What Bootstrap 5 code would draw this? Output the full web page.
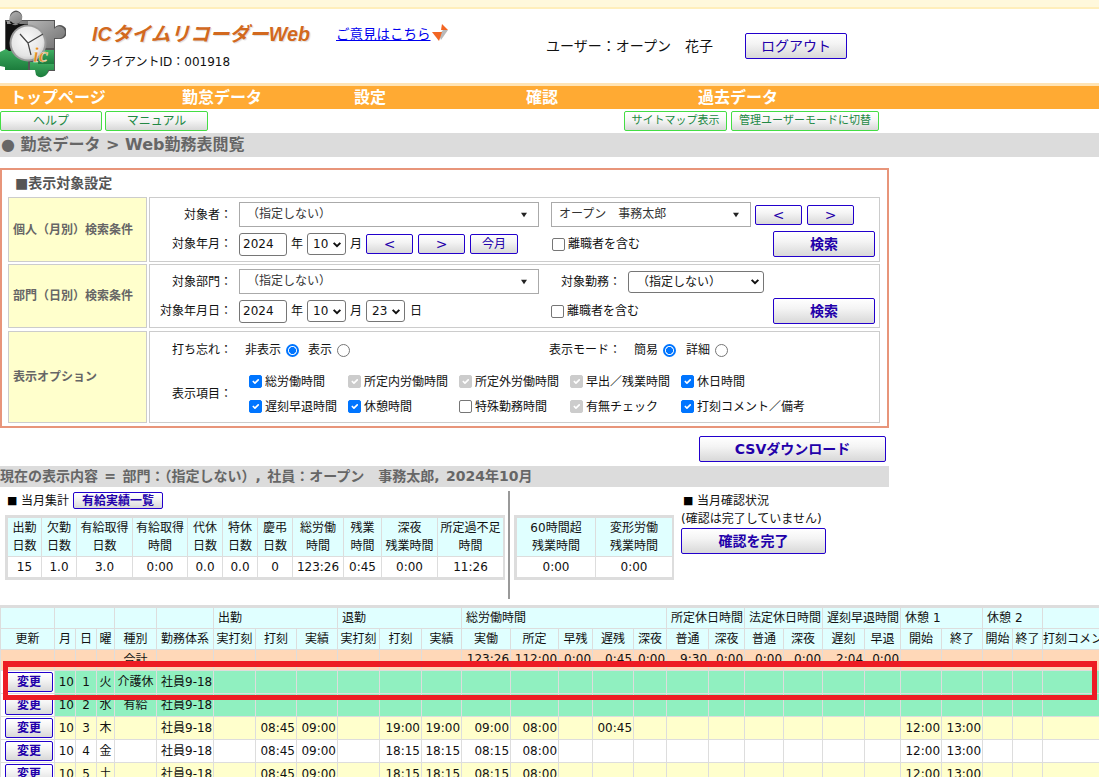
<!DOCTYPE html>
<html lang="ja">
<head>
<meta charset="utf-8">
<title>Web勤務表閲覧</title>
<link href="https://cdn.jsdelivr.net/npm/bootstrap@5.3.0/dist/css/bootstrap.min.css" rel="stylesheet">
<style>
html,body{height:777px;overflow:hidden}
body{font-family:"DejaVu Sans","Noto Sans CJK JP",sans-serif;font-size:12px;line-height:18px;color:#111;background:#fff}
.topstrip{height:9px;background:#fff8dc;border-bottom:2px solid #ffeebb}
.hdr{height:74px}
.logo-box{width:88px;padding-top:1px}
.hdr-a{width:458px;padding-top:12px}
.app-title{width:248px;padding-left:4px;font:italic bold 19.7px/26px "Liberation Sans","Noto Sans CJK JP",sans-serif;color:#d2691e;text-shadow:1px 1px 1px #ddd;white-space:nowrap}
.opinion{font-size:13.5px;line-height:26px;color:#0000ee;white-space:nowrap}
.opinion-ic{margin-top:3px;margin-left:1px}
.client{margin-top:6px}
.username{font-size:14px;width:168px;white-space:nowrap}
.hdrline{height:3px;background:#ffe4b5}
.mainnav{height:23px;background:#ffaa33;padding-left:10px}
.mainnav a{width:172px;font-size:16px;font-weight:700;line-height:23px;color:#fff;text-decoration:none;white-space:nowrap}
.subnav{height:24px;padding-top:2px}
.btn.gbtn{padding:0;height:20px;font-size:12px;line-height:18px;color:#228844;font-weight:400;border:1px solid #44dd44;border-radius:2px;background:linear-gradient(#fff,#f6f6f6 45%,#d8d8d8);white-space:nowrap}
.gb1{width:102px}.gb2{width:103px;margin-left:3px}
.gb3{width:103px;margin-left:416px;font-size:11px!important}
.gb4{width:148px;margin-left:4px;font-size:11px!important}
.crumb{height:24px;background:#dcdcdc;color:#666;font-size:16px;font-weight:700;line-height:23px;padding-left:1px;white-space:nowrap}
.panel{width:889px;height:260px;margin-top:11px;border:2px solid #e8957a;padding:0 7px 3px 6px}
.panel-title{height:27px;padding-left:7px;line-height:27px;font-size:14px;font-weight:700;color:#555}
.prow{gap:2px;margin-bottom:2px}
.h65{height:65px}.h64{height:64px;margin-bottom:3px}.h92{height:92px;margin-bottom:0}
.lc{width:139px;border:1px solid #ccc;background:#ffffcc;color:#666;font-weight:700;padding-left:4px;white-space:nowrap}
.rc{width:731px;border:1px solid #ccc;padding:4px 4px 0 0;white-space:nowrap}
.line1{height:25px}.line2{height:26px;margin-top:4px}
.lb{width:82px;margin-right:7px;text-align:right;flex:none}
.form-select.bigsel{height:25px;padding:0 20px 0 7px;font-size:12px;line-height:23px;color:#333;border:1px solid #aaa;border-radius:0;background-image:url("data:image/svg+xml,%3Csvg xmlns='http://www.w3.org/2000/svg' viewBox='0 0 10 8'%3E%3Cpath d='M1 1h8L5 7z' fill='%23222'/%3E%3C/svg%3E");background-size:8px 6px;background-position:right 10px center}
.w300{width:300px}.w200{width:200px;margin-left:12px}
.form-control.yearin{width:48px;height:23px;padding:0 3px;font-size:12px;border:1px solid #767676;border-radius:3px;color:#111}
.form-select.smsel{width:39px;height:22px;padding:0 0 0 5px;font-size:12px;color:#111;border:1px solid #767676;border-radius:3px;background-image:url("data:image/svg+xml,%3Csvg xmlns='http://www.w3.org/2000/svg' viewBox='0 0 12 8'%3E%3Cpath d='M2 2l4 4 4-4' fill='none' stroke='%23111' stroke-width='2.4'/%3E%3C/svg%3E");background-size:10px 7px;background-position:right 3px center}
.ml4{margin-left:4px}.ml5{margin-left:5px}
.btn.bbtn{padding:0;font-size:12px;line-height:16px;color:#2200aa;border:1px solid #2200cc;border-radius:2px;background:linear-gradient(#fff,#f4f4f4 40%,#d8d8d8);white-space:nowrap}
.btn.bbold{font-weight:700}
.btn.bbtn.logout{width:102px;height:26px;margin-left:31px;font-size:14px}
.navb{width:47px;height:20px;font-size:14px!important}
.today{width:48px;height:20px;margin-left:5px}
.searchb{width:102px;height:26px;font-size:14px!important}
.ms-sr{margin-left:auto}
.form-check-input.ck{width:13px;height:13px;margin:0 3px 0 0;border:1px solid #767676;border-radius:2px;flex:none}
.form-check-input.ck:checked{background-color:#0075ff;border-color:#0075ff}
.form-check-input.ck.grey:checked,.form-check-input.ck.grey:disabled{background-color:#ccc;border-color:#ccc;opacity:1}
.form-check-input.rd{width:13px;height:13px;margin:0 0 0 5px;border:1px solid #767676;flex:none}
.form-check-input.rd:checked{background:radial-gradient(circle,#0075ff 0 3.2px,#fff 3.8px);border:2px solid #0075ff}
.chk-a{margin-left:34px}.chk-b{margin-left:129px}
.ml22{margin-left:22px}
.form-select.kinmu{width:136px;margin-left:7px;padding-left:8px}
.opt-line{height:24px;margin-top:5px}
.r-a{margin-left:-2px}.r-b{margin-left:9px}.mode{margin-left:199px}.r-c{margin-left:13px}.r-d{margin-left:10px}
.opt-items{margin-top:7px}
.itemgrid{display:grid;grid-template-columns:99px 111px 111px 111px auto;grid-auto-rows:25px;margin-left:10px}
.itemgrid label{display:flex;align-items:center;white-space:nowrap}
.h92 .rc{padding-top:1px}
.csvrow{margin-top:8px;width:886px}
.csvb{width:187px;height:26px;font-size:14px!important}
.band{width:889px;height:21px;margin-top:4px;background:#dcdcdc;color:#666;font-size:14px;font-weight:700;line-height:20px;white-space:nowrap;word-spacing:1.5px}
.sumarea{height:118px}
.sum-left{width:500px;margin-left:5px;flex:none}
.sumhead{height:17px;margin-top:5px;margin-left:2px}
.sq{width:14px;font-size:11px;line-height:17px;color:#000}
.yuukyu{width:90px;height:17px;margin-left:4px;line-height:14px!important}
.stwrap{margin-top:6px;border:2px solid #ddd}
.stwrap2{width:160px;margin-left:4px;margin-top:28px;flex:none;align-self:flex-start}
.divider{width:2px;height:108px;margin-left:3px;margin-top:4px;background:#999;flex:none}
.sum-right{margin-left:7px;margin-top:4px;white-space:nowrap}
.kakunin-h{height:19px;padding-left:2px}
.kakuninb{width:145px;height:26px;font-size:14px!important;display:block}
.table.st{width:100%;margin:0;table-layout:fixed;--bs-table-bg:#fff;border-color:#ddd;--bs-border-color:#ddd}
.table.st>:not(caption)>*>*{padding:0;border:1px solid #ddd;text-align:center;vertical-align:middle;line-height:18px;font-size:12px;white-space:nowrap;overflow:hidden;color:#111}
.table.st th{font-weight:400;height:39px;--bs-table-bg:#e0ffff}
.table.st td{height:21px}
.s1{width:34px}.s2{width:35px}.s3{width:56px}.s4{width:55px}.s8{width:51px}.s9{width:38px}.s11{width:66px}.s12{width:79px}.s13{width:77px}
.wtwrap{border-top:2px solid #ddd;height:172px;overflow:hidden;position:relative;width:1099px}
.table.wt{width:1140px;margin:0;table-layout:fixed;--bs-table-bg:#fff}
.table.wt>:not(caption)>*>*{padding:0 1px 0 0;border:1px solid #ddd;vertical-align:middle;line-height:16px;font-size:12px;font-weight:400;white-space:nowrap;overflow:hidden;text-align:right;color:#111}
.table.wt tr.hd1>*,.table.wt tr.hd2>*{--bs-table-bg:#e0ffff;height:21px}
.table.wt tr.hd2>*{text-align:center;padding:0}
.table.wt tr.hd1>*{text-align:left;padding-left:4px}
.table.wt tr.sm>*{--bs-table-bg:#ffd8b8;height:21px;line-height:12px;vertical-align:top;padding-top:3px}
.table.wt tr.gr>*{--bs-table-bg:#90f0c0;height:23px}
.table.wt tr.yl>*{--bs-table-bg:#ffffcc;height:23px}
.table.wt tr.wh>*{--bs-table-bg:#fff;height:23px}
.table.wt tr>.upd{--bs-table-bg:#fff;padding:0 0 0 4px;text-align:left}
.table.wt tr>.ctr{text-align:center;padding:0}
.table.wt tr.sm>.ctr{padding-top:4px}
.table.wt tr>.lft{text-align:left;padding:0 0 0 4px}
.henko{width:48px;height:20px;display:block}
.c54{width:54px}.c21{width:21px}.c18{width:18px}.c42{width:42px}.c57{width:57px}.c41{width:41px}.c40{width:40px}.c49{width:49px}.c48{width:48px}.c34{width:34px}.c33{width:33px}.c36{width:36px}.c39{width:39px}.c30{width:30px}.c98{width:98px}
.redbox{position:absolute;left:3px;top:54px;width:1094px;height:39px;border:5px solid #ed1c24;border-top-width:6px;pointer-events:none}
</style>
</head>
<body>
<div class="topstrip"></div>
<header class="hdr d-flex">
  <div class="logo-box">
    <svg width="66" height="72" viewBox="0 10 66 72" role="img" aria-label="ICタイムリコーダー ロゴ">
      <defs>
        <linearGradient id="lgGrey" x1="0" y1="0" x2="1" y2="1"><stop offset="0" stop-color="#b5b5b5"/><stop offset="1" stop-color="#6f6f6f"/></linearGradient>
        <radialGradient id="lgFace" cx=".45" cy=".4" r=".7"><stop offset="0" stop-color="#fbfbfb"/><stop offset=".7" stop-color="#e4e4e4"/><stop offset="1" stop-color="#b8b8b8"/></radialGradient>
        <linearGradient id="lgGreen" x1="0" y1="0" x2="0" y2="1"><stop offset="0" stop-color="#3fae62"/><stop offset="1" stop-color="#1c7c3c"/></linearGradient>
      </defs>
      <path fill="#555" d="M5 20h6a6 6 0 1 1 10 0h34v7a7 7 0 1 1 4 12h-4v32h-6a7 7 0 0 1-13 0v-1H5z"/>
      <path fill="#111" d="M6 22h24v30H6z"/>
      <path fill="url(#lgGrey)" d="M28 21h26v8a6 6 0 1 1 3 9h-3v10H28z"/>
      <path fill="url(#lgGrey)" d="M7 21h4a6 6 0 1 0 0-6 6 6 0 1 0 10 6h7v3H7z"/>
      <path fill="url(#lgGreen)" d="M0 52l6-3 3 2h19v19H5v-3l-5-1z"/>
      <path fill="url(#lgGreen)" d="M30 62h24v8h-6a7 7 0 0 1-12 5l-1-5h-5z"/>
      <path fill="url(#lgGreen)" d="M38 50h16v14H38z"/>
      <circle cx="28" cy="43" r="18.5" fill="#999"/>
      <circle cx="28" cy="43" r="16.5" fill="url(#lgFace)"/>
      <path d="M28 43 20 34M28 43l15-9M28 43l3 12" stroke="#444" stroke-width="1.2" fill="none"/>
      <text x="33" y="62" font-family="Liberation Serif,serif" font-style="italic" font-weight="700" font-size="21" fill="#e08a20" stroke="#fff" stroke-width=".4">ic</text>
    </svg>
  </div>
  <div class="hdr-a">
    <div class="d-flex">
      <div class="app-title">ICタイムリコーダーWeb</div>
      <a class="opinion" href="#">ご意見はこちら </a>
      <svg class="opinion-ic" width="16" height="17" viewBox="0 0 16 17" aria-hidden="true"><path d="M10 0l6 6H9z" fill="#f26522"/><path d="M11 6h5l-7 10-2-5z" fill="#b9b9b9"/><path d="M0 8h10l-3 9z" fill="#f26522"/></svg>
    </div>
    <div class="client">クライアントID：001918</div>
  </div>
  <div class="d-flex align-items-center">
    <div class="username">ユーザー：オープン　花子</div>
    <button class="btn bbtn logout" type="button">ログアウト</button>
  </div>
</header>
<div class="hdrline"></div>
<nav class="mainnav d-flex">
  <a href="#">トップページ</a><a href="#">勤怠データ</a><a href="#">設定</a><a href="#">確認</a><a href="#">過去データ</a>
</nav>
<div class="subnav d-flex">
  <button class="btn gbtn gb1" type="button">ヘルプ</button>
  <button class="btn gbtn gb2" type="button">マニュアル</button>
  <button class="btn gbtn gb3" type="button">サイトマップ表示</button>
  <button class="btn gbtn gb4" type="button">管理ユーザーモードに切替</button>
</div>
<div class="crumb">● 勤怠データ &gt; Web勤務表閲覧</div>

<section class="panel">
  <div class="panel-title">■表示対象設定</div>
  <div class="prow d-flex h65">
    <div class="lc d-flex align-items-center">個人（月別）検索条件</div>
    <div class="rc">
      <div class="line1 d-flex align-items-center">
        <span class="lb">対象者：</span>
        <select class="form-select bigsel w300"><option>（指定しない）</option></select>
        <select class="form-select bigsel w200"><option>オープン　事務太郎</option></select>
        <button class="btn bbtn navb ml4" type="button">&lt;</button>
        <button class="btn bbtn navb ml5" type="button">&gt;</button>
      </div>
      <div class="line2 d-flex align-items-center">
        <span class="lb">対象年月：</span>
        <input class="form-control yearin" value="2024">
        <span class="ml4">年</span>
        <select class="form-select smsel ml4"><option>10</option></select>
        <span class="ml4">月</span>
        <button class="btn bbtn navb ml4" type="button">&lt;</button>
        <button class="btn bbtn navb ml5" type="button">&gt;</button>
        <button class="btn bbtn today" type="button">今月</button>
        <label class="d-flex align-items-center chk-a"><input class="form-check-input ck" type="checkbox">離職者を含む</label>
        <button class="btn bbtn bbold searchb ms-sr" type="button">検索</button>
      </div>
    </div>
  </div>
  <div class="prow d-flex h64">
    <div class="lc d-flex align-items-center">部門（日別）検索条件</div>
    <div class="rc">
      <div class="line1 d-flex align-items-center">
        <span class="lb">対象部門：</span>
        <select class="form-select bigsel w300"><option>（指定しない）</option></select>
        <span class="ml22">対象勤務：</span>
        <select class="form-select smsel kinmu"><option>（指定しない）</option></select>
      </div>
      <div class="line2 d-flex align-items-center">
        <span class="lb">対象年月日：</span>
        <input class="form-control yearin" value="2024">
        <span class="ml4">年</span>
        <select class="form-select smsel ml4"><option>10</option></select>
        <span class="ml4">月</span>
        <select class="form-select smsel ml4"><option>23</option></select>
        <span class="ml5">日</span>
        <label class="d-flex align-items-center chk-b"><input class="form-check-input ck" type="checkbox">離職者を含む</label>
        <button class="btn bbtn bbold searchb ms-sr" type="button">検索</button>
      </div>
    </div>
  </div>
  <div class="prow d-flex h92">
    <div class="lc d-flex align-items-center">表示オプション</div>
    <div class="rc">
      <div class="opt-line d-flex align-items-center">
        <span class="lb">打ち忘れ：</span>
        <label class="d-flex align-items-center r-a ps-2">非表示<input class="form-check-input rd" type="radio" name="u" checked></label>
        <label class="d-flex align-items-center r-b">表示<input class="form-check-input rd" type="radio" name="u"></label>
        <span class="mode">表示モード：</span>
        <label class="d-flex align-items-center r-c">簡易<input class="form-check-input rd" type="radio" name="m" checked></label>
        <label class="d-flex align-items-center r-d">詳細<input class="form-check-input rd" type="radio" name="m"></label>
      </div>
      <div class="opt-items d-flex align-items-center">
        <span class="lb">表示項目：</span>
        <div class="itemgrid">
          <label><input class="form-check-input ck" type="checkbox" checked>総労働時間</label>
          <label><input class="form-check-input ck grey" type="checkbox" checked disabled>所定内労働時間</label>
          <label><input class="form-check-input ck grey" type="checkbox" checked disabled>所定外労働時間</label>
          <label><input class="form-check-input ck grey" type="checkbox" checked disabled>早出／残業時間</label>
          <label><input class="form-check-input ck" type="checkbox" checked>休日時間</label>
          <label><input class="form-check-input ck" type="checkbox" checked>遅刻早退時間</label>
          <label><input class="form-check-input ck" type="checkbox" checked>休憩時間</label>
          <label><input class="form-check-input ck" type="checkbox">特殊勤務時間</label>
          <label><input class="form-check-input ck grey" type="checkbox" checked disabled>有無チェック</label>
          <label><input class="form-check-input ck" type="checkbox" checked>打刻コメント／備考</label>
        </div>
      </div>
    </div>
  </div>
</section>

<div class="csvrow d-flex justify-content-end">
  <button class="btn bbtn bbold csvb" type="button">CSVダウンロード</button>
</div>
<div class="band">現在の表示内容 = 部門：（指定しない）, 社員：オープン　事務太郎, 2024年10月</div>

<div class="sumarea d-flex">
  <div class="sum-left">
    <div class="sumhead d-flex align-items-center">
      <span class="sq">■</span><span>当月集計</span>
      <button class="btn bbtn bbold yuukyu" type="button">有給実績一覧</button>
    </div>
    <div class="stwrap">
      <table class="table st">
        <colgroup><col class="s1"><col class="s2"><col class="s3"><col class="s4"><col class="s2"><col class="s2"><col class="s2"><col class="s8"><col class="s9"><col class="s3"><col class="s11"></colgroup>
        <tr><th>出勤<br>日数</th><th>欠勤<br>日数</th><th>有給取得<br>日数</th><th>有給取得<br>時間</th><th>代休<br>日数</th><th>特休<br>日数</th><th>慶弔<br>日数</th><th>総労働<br>時間</th><th>残業<br>時間</th><th>深夜<br>残業時間</th><th>所定過不足<br>時間</th></tr>
        <tr><td>15</td><td>1.0</td><td>3.0</td><td>0:00</td><td>0.0</td><td>0.0</td><td>0</td><td>123:26</td><td>0:45</td><td>0:00</td><td>11:26</td></tr>
      </table>
    </div>
  </div>
  <div class="divider"></div>
  <div class="stwrap stwrap2">
    <table class="table st">
      <colgroup><col class="s12"><col class="s13"></colgroup>
      <tr><th>60時間超<br>残業時間</th><th>変形労働<br>残業時間</th></tr>
      <tr><td>0:00</td><td>0:00</td></tr>
    </table>
  </div>
  <div class="sum-right">
    <div class="kakunin-h d-flex align-items-center"><span class="sq">■</span><span>当月確認状況</span></div>
    <div>(確認は完了していません)</div>
    <button class="btn bbtn bbold kakuninb" type="button">確認を完了</button>
  </div>
</div>

<div class="wtwrap">
  <table class="table wt">
    <colgroup><col class="c54"><col class="c21"><col class="c21"><col class="c18"><col class="c42"><col class="c57"><col class="c42"><col class="c41"><col class="c41"><col class="c42"><col class="c42"><col class="c40"><col class="c49"><col class="c48"><col class="c34"><col class="c41"><col class="c33"><col class="c42"><col class="c36"><col class="c39"><col class="c39"><col class="c42"><col class="c36"><col class="c41"><col class="c41"><col class="c30"><col class="c30"><col class="c98"></colgroup>
    <tr class="hd1"><th></th><th colspan="3"></th><th></th><th></th><th colspan="3">出勤</th><th colspan="3">退勤</th><th colspan="5">総労働時間</th><th colspan="2">所定休日時間</th><th colspan="2">法定休日時間</th><th colspan="2">遅刻早退時間</th><th colspan="2">休憩 1</th><th colspan="2">休憩 2</th><th></th></tr>
    <tr class="hd2"><th>更新</th><th>月</th><th>日</th><th>曜</th><th>種別</th><th>勤務体系</th><th>実打刻</th><th>打刻</th><th>実績</th><th>実打刻</th><th>打刻</th><th>実績</th><th>実働</th><th>所定</th><th>早残</th><th>遅残</th><th>深夜</th><th>普通</th><th>深夜</th><th>普通</th><th>深夜</th><th>遅刻</th><th>早退</th><th>開始</th><th>終了</th><th>開始</th><th>終了</th><th>打刻コメント／備考</th></tr>
    <tr class="sm"><td></td><td></td><td></td><td></td><td class="ctr">合計</td><td></td><td></td><td></td><td></td><td></td><td></td><td></td><td>123:26</td><td>112:00</td><td>0:00</td><td>0:45</td><td>0:00</td><td>9:30</td><td>0:00</td><td>0:00</td><td>0:00</td><td>2:04</td><td>0:00</td><td></td><td></td><td></td><td></td><td></td></tr>
    <tr class="gr"><td class="upd"><button class="btn bbtn bbold henko" type="button">変更</button></td><td>10</td><td class="ctr">1</td><td class="ctr">火</td><td class="ctr">介護休</td><td class="lft">社員9-18</td><td></td><td></td><td></td><td></td><td></td><td></td><td></td><td></td><td></td><td></td><td></td><td></td><td></td><td></td><td></td><td></td><td></td><td></td><td></td><td></td><td></td><td></td></tr>
    <tr class="gr"><td class="upd"><button class="btn bbtn bbold henko" type="button">変更</button></td><td>10</td><td class="ctr">2</td><td class="ctr">水</td><td class="ctr">有給</td><td class="lft">社員9-18</td><td></td><td></td><td></td><td></td><td></td><td></td><td></td><td></td><td></td><td></td><td></td><td></td><td></td><td></td><td></td><td></td><td></td><td></td><td></td><td></td><td></td><td></td></tr>
    <tr class="yl"><td class="upd"><button class="btn bbtn bbold henko" type="button">変更</button></td><td>10</td><td class="ctr">3</td><td class="ctr">木</td><td></td><td class="lft">社員9-18</td><td></td><td>08:45</td><td>09:00</td><td></td><td>19:00</td><td>19:00</td><td>09:00</td><td>08:00</td><td></td><td>00:45</td><td></td><td></td><td></td><td></td><td></td><td></td><td></td><td>12:00</td><td>13:00</td><td></td><td></td><td></td></tr>
    <tr class="wh"><td class="upd"><button class="btn bbtn bbold henko" type="button">変更</button></td><td>10</td><td class="ctr">4</td><td class="ctr">金</td><td></td><td class="lft">社員9-18</td><td></td><td>08:45</td><td>09:00</td><td></td><td>18:15</td><td>18:15</td><td>08:15</td><td>08:00</td><td></td><td></td><td></td><td></td><td></td><td></td><td></td><td></td><td></td><td>12:00</td><td>13:00</td><td></td><td></td><td></td></tr>
    <tr class="yl"><td class="upd"><button class="btn bbtn bbold henko" type="button">変更</button></td><td>10</td><td class="ctr">5</td><td class="ctr">土</td><td></td><td class="lft">社員9-18</td><td></td><td>08:45</td><td>09:00</td><td></td><td>18:15</td><td>18:15</td><td>08:15</td><td>08:00</td><td></td><td></td><td></td><td></td><td></td><td></td><td></td><td></td><td></td><td>12:00</td><td>13:00</td><td></td><td></td><td></td></tr>
  </table>
  <div class="redbox"></div>
</div>
<script src="https://cdn.jsdelivr.net/npm/bootstrap@5.3.0/dist/js/bootstrap.bundle.min.js"></script>
</body>
</html>
